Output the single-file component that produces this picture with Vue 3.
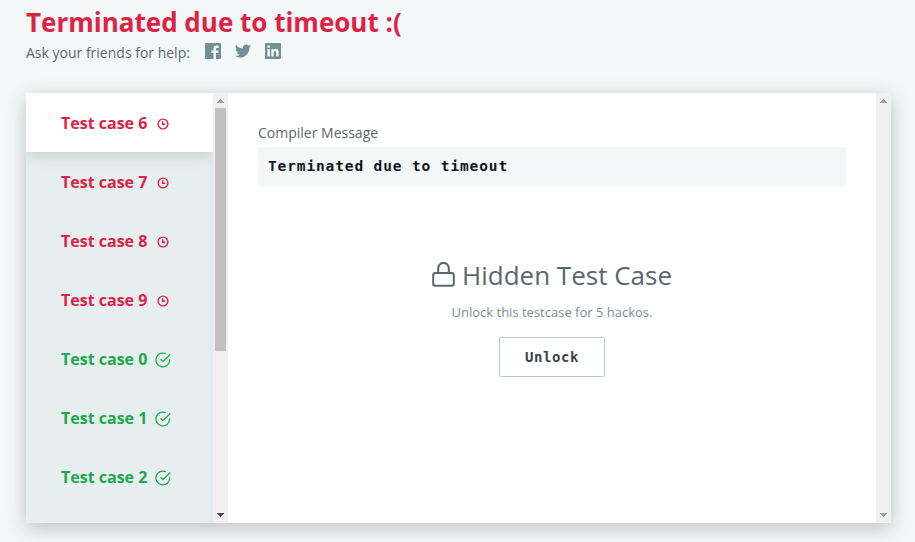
<script setup>
const cases = [
  { id: 6, ok: false },
  { id: 7, ok: false },
  { id: 8, ok: false },
  { id: 9, ok: false },
  { id: 0, ok: true },
  { id: 1, ok: true },
  { id: 2, ok: true },
]
</script>

<template>
  <main class="page">
    <h1>Terminated due to timeout :(</h1>
    <div class="share">
      <span class="share-label">Ask your friends for help:</span>
      <svg class="social" viewBox="0 0 16 16"><path fill-rule="evenodd" d="M1 0h14q1 0 1 1v14q0 1-1 1h-4v-6h2.2l.4-2.4H11V6.2c0-.8.3-1.2 1.3-1.2h1.4V2.7c-3.500-.6-5.200.5-5.200 3.200v1.700H6.300V10h2.200v6H1q-1 0-1-1V1q0-1 1-1z" /></svg>
      <svg class="social" viewBox="0 0 24 24"><path d="M24 4.560a9.800 9.800 0 0 1-2.830.780 4.940 4.940 0 0 0 2.170-2.720 9.900 9.900 0 0 1-3.130 1.190 4.920 4.920 0 0 0-8.380 4.480A13.960 13.960 0 0 1 1.670 3.150a4.920 4.920 0 0 0 1.520 6.570 4.900 4.900 0 0 1-2.230-.610 4.930 4.930 0 0 0 3.950 4.890 4.900 4.900 0 0 1-2.220.080 4.930 4.930 0 0 0 4.600 3.420A9.900 9.900 0 0 1 0 19.540a13.940 13.940 0 0 0 7.550 2.210c9.140 0 14.310-7.720 13.980-14.640A10 10 0 0 0 24 4.560z" /></svg>
      <svg class="social" viewBox="0 0 16 16"><path fill-rule="evenodd" d="M1 0h14q1 0 1 1v14q0 1-1 1H1q-1 0-1-1V1q0-1 1-1zM2.400 6v7.600h2.400V6zM3.600 2.200a1.400 1.400 0 1 0 0 2.800 1.400 1.400 0 0 0 0-2.800zM6.300 6v7.600h2.300V9.800c0-2.400 2.600-2.400 2.600-.1v3.900h2.400V9.200c0-3.600-3.600-4.300-5-2.200V6z" /></svg>
    </div>

    <section class="panel">
      <nav class="tabs">
        <div v-for="(c, i) in cases" :key="c.id" class="tab" :class="{ active: i === 0, ok: c.ok }">
          <span>Test case {{ c.id }}</span>
          <svg v-if="c.ok" class="check" viewBox="0 0 16 16"><path d="M14.700 7.300V8A6.900 6.900 0 1 1 10.700 1.700M15.200 2.500 8 9.600 5.500 7.200" /></svg>
          <svg v-else class="clock" viewBox="0 0 12 12"><circle cx="6" cy="6" r="4.900" /><path d="M5.700 3.200v3.100h2.600" /></svg>
        </div>
      </nav>
      <div class="scrollbar">
        <svg class="arrow" viewBox="0 0 7 4"><path d="M3 0h1v1h1v1h1v1h1v1H0V3h1V2h1V1h1z" /></svg>
        <div class="thumb"></div>
        <svg class="arrow down dark" viewBox="0 0 7 4"><path d="M0 0h7v1H6v1H5v1H4v1H3V3H2V2H1V1H0z" /></svg>
      </div>
      <div class="content">
        <div class="label">Compiler Message</div>
        <pre class="message">Terminated due to timeout</pre>
        <div class="hidden-case">
          <h2>
            <svg class="lock" viewBox="0 0 24 26"><rect x="1.200" y="11" width="20.600" height="12.800" rx="2.200" /><path d="M6.200 11V6.200a5.300 5.300 0 0 1 10.600 0V11" /></svg>
            <span>Hidden Test Case</span>
          </h2>
          <p>Unlock this testcase for 5 hackos.</p>
          <button type="button">Unlock</button>
        </div>
      </div>
      <div class="scrollbar">
        <svg class="arrow" viewBox="0 0 7 4"><path d="M3 0h1v1h1v1h1v1h1v1H0V3h1V2h1V1h1z" /></svg>
        <svg class="arrow down" viewBox="0 0 7 4"><path d="M0 0h7v1H6v1H5v1H4v1H3V3H2V2H1V1H0z" /></svg>
      </div>
    </section>
  </main>
</template>

<style>
body {
  background: #f3f7f7;
  overflow: hidden;
}
</style>

<style scoped>
.page {
  box-sizing: border-box;
  height: 542px;
  padding: 4px 24px 0 26px;
  font-family: "Open Sans", "Noto Sans", sans-serif;
  color: #576871;
}
h1 {
  margin: 0;
  font-size: 26px;
  line-height: 36px;
  font-weight: 700;
  color: #dd2344;
  white-space: nowrap;
}
.share {
  display: flex;
  align-items: center;
  height: 21px;
  font-size: 14px;
}
.share-label {
  width: 179px;
  padding-top: 3px;
  white-space: nowrap;
}
.social {
  width: 16px;
  height: 16px;
  margin-right: 14px;
  fill: #738f93;
}
.panel {
  display: flex;
  height: 430px;
  margin-top: 32px;
  border-radius: 2px 2px 0 0;
  background: #fff;
  box-shadow: 0 5px 20px rgba(0, 0, 0, 0.22);
}
.tabs {
  width: 187px;
  overflow: hidden;
  background: #e7eeef;
  box-shadow: inset -8px 0 12px -8px rgba(0, 0, 0, 0.04);
}
.tab {
  display: flex;
  align-items: center;
  box-sizing: border-box;
  height: 59px;
  padding-left: 35px;
  font-size: 16px;
  font-weight: 700;
  color: #dd2344;
}
.tab span {
  width: 94px;
  white-space: nowrap;
}
.tab.active {
  background: #fff;
  box-shadow: 0 4px 14px rgba(0, 0, 0, 0.13);
}
.tab.ok {
  color: #1ba94c;
}
.tab svg {
  fill: none;
  stroke: currentColor;
}
.clock {
  width: 12px;
  height: 12px;
  margin: 2px 0 0 2px;
  stroke-width: 1.4;
}
.check {
  width: 16px;
  height: 16px;
  margin-top: 2px;
  stroke-width: 1.3;
}
.scrollbar {
  display: flex;
  flex-direction: column;
  align-items: center;
  width: 15px;
  flex: none;
  background: #f0f0f0;
}
.arrow {
  width: 7px;
  height: 4px;
  margin: 6px 0 5px;
  fill: #a0a0a0;
}
.arrow.down {
  margin: auto 0 6px;
}
.arrow.dark {
  fill: #4d4d4d;
}
.thumb {
  width: 11px;
  height: 243px;
  background: #c1c1c1;
}
.content {
  box-sizing: border-box;
  width: 648px;
  padding: 30px;
}
.label {
  height: 24px;
  font-size: 14px;
  line-height: 20px;
}
.message {
  box-sizing: border-box;
  height: 39px;
  margin: 0;
  padding: 0 10px;
  font: 700 14.5px/39px "DejaVu Sans Mono", monospace;
  letter-spacing: 0.87px;
  color: #0e141e;
  background: #f3f7f7;
}
.hidden-case {
  display: flex;
  flex-direction: column;
  align-items: center;
  padding-top: 70px;
}
h2 {
  display: flex;
  align-items: center;
  gap: 6px;
  height: 38px;
  margin: 0;
  font-size: 26px;
  font-weight: 400;
  white-space: nowrap;
}
.lock {
  width: 24px;
  height: 26px;
  fill: none;
  stroke: currentColor;
  stroke-width: 2;
}
p {
  margin: 8px 0 15px;
  font-size: 13px;
  line-height: 20px;
  color: #738f93;
}
button {
  width: 106px;
  height: 40px;
  padding: 0;
  border: 1px solid #b7c9cc;
  border-radius: 2px;
  background: #fff;
  color: #39424e;
  font: 700 14px "DejaVu Sans Mono", monospace;
  letter-spacing: 0.6px;
}
</style>
